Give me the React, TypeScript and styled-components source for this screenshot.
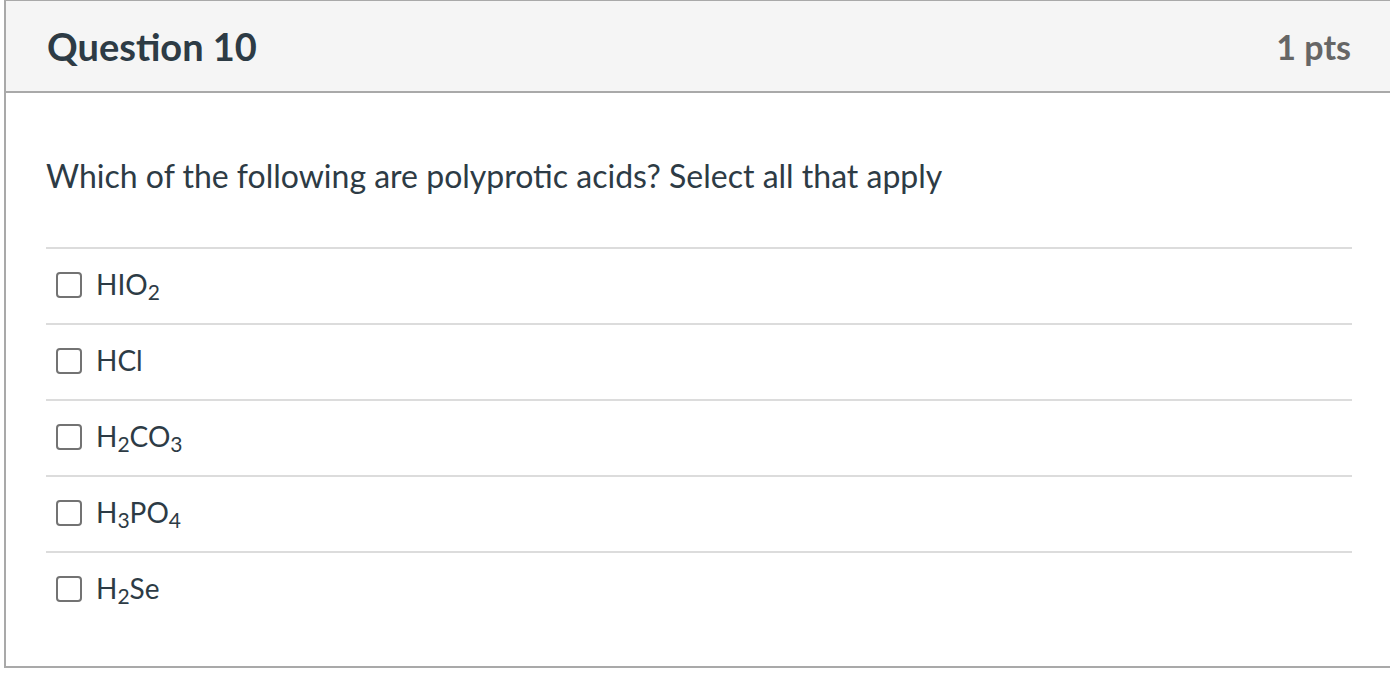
import React from "react";
import styled, { createGlobalStyle } from "styled-components";

const Global = createGlobalStyle`
  html, body { margin: 0; padding: 0; background: #fff; overflow: hidden; }
  body { font-family: Lato, "Noto Sans", sans-serif; color: #2d3b45; }
`;

const Page = styled.div`
  width: 1390px;
  height: 674px;
  overflow: hidden;
  padding-left: 4px;
  box-sizing: border-box;
`;

const Card = styled.section`
  width: 1400px;
  border: 2px solid #a9a9a9;
  border-top-width: 1px;
  box-sizing: border-box;
`;

const Header = styled.header`
  height: 90px;
  background: #f5f5f5;
  border-bottom: 2px solid #a9a9a9;
  display: flex;
  align-items: center;
  justify-content: space-between;
  padding: 0 51px 0 41px;
`;

const Title = styled.h2`
  margin: 0;
  font-size: 38px;
  font-weight: 700;
  color: #2d3b45;
`;

const Points = styled.div`
  font-size: 34px;
  font-weight: 700;
  color: #666;
`;

const Body = styled.div`
  padding: 63px 50px 39px 40px;
`;

const Prompt = styled.p`
  margin: 0 0 51px;
  font-size: 32px;
  line-height: 40px;
`;

const Options = styled.ul`
  list-style: none;
  margin: 0;
  padding: 0;
`;

const Option = styled.li`
  height: 74px;
  box-sizing: content-box;
  border-top: 2px solid #dcdcdc;
  display: flex;
  align-items: center;
  padding-left: 10px;
  gap: 14px;
  font-size: 28px;
  line-height: 32px;
`;

const Box = styled.span`
  width: 26px;
  height: 26px;
  margin-bottom: 2px;
  box-sizing: border-box;
  border: 2px solid #737373;
  border-radius: 4px;
  flex: none;
`;

const Label = styled.span`
  margin-bottom: 4px;
`;

const Sub = styled.sub`
  font-size: 0.75em;
  vertical-align: -0.25em;
  line-height: 0;
`;

const options: React.ReactNode[] = [
  <>HIO<Sub>2</Sub></>,
  <>HCl</>,
  <>H<Sub>2</Sub>CO<Sub>3</Sub></>,
  <>H<Sub>3</Sub>PO<Sub>4</Sub></>,
  <>H<Sub>2</Sub>Se</>,
];

export default function App() {
  return (
    <Page>
      <Global />
      <Card>
        <Header>
          <Title>Question 10</Title>
          <Points>1 pts</Points>
        </Header>
        <Body>
          <Prompt>Which of the following are polyprotic acids? Select all that apply</Prompt>
          <Options>
            {options.map((o, i) => (
              <Option key={i}>
                <Box />
                <Label>{o}</Label>
              </Option>
            ))}
          </Options>
        </Body>
      </Card>
    </Page>
  );
}
